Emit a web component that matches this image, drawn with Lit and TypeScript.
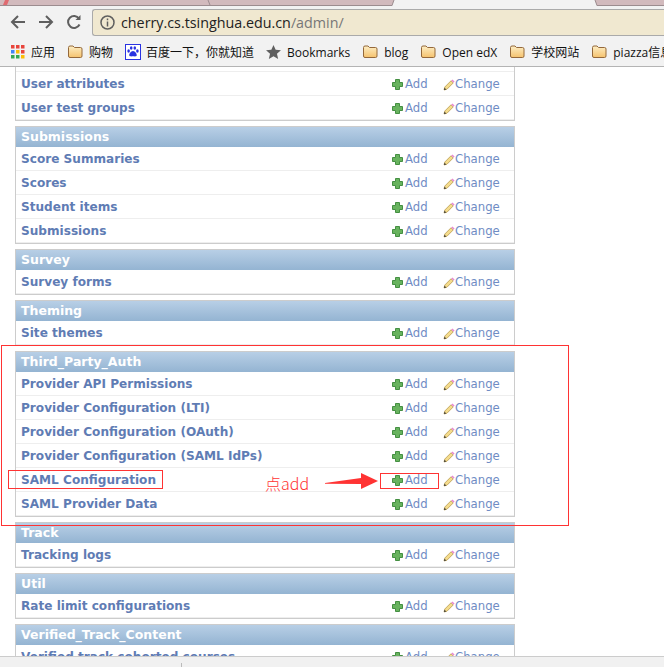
import { LitElement, html, css, svg } from "lit";
import { customElement } from "lit/decorators.js";

type Mod = { title?: string; rows: string[]; stub?: boolean };

const MODULES: Mod[] = [
  { rows: ["User attributes", "User test groups"], stub: true },
  { title: "Submissions", rows: ["Score Summaries", "Scores", "Student items", "Submissions"] },
  { title: "Survey", rows: ["Survey forms"] },
  { title: "Theming", rows: ["Site themes"] },
  {
    title: "Third_Party_Auth",
    rows: [
      "Provider API Permissions",
      "Provider Configuration (LTI)",
      "Provider Configuration (OAuth)",
      "Provider Configuration (SAML IdPs)",
      "SAML Configuration",
      "SAML Provider Data",
    ],
  },
  { title: "Track", rows: ["Tracking logs"] },
  { title: "Util", rows: ["Rate limit configurations"] },
  { title: "Verified_Track_Content", rows: ["Verified track cohorted courses"] },
];

const plus = svg`<svg class="ic" width="11" height="11" viewBox="0 0 11 11">
  <path d="M3.500.5h4v3h3v4h-3v3h-4v-3h-3v-4h3z" fill="#68b35e" stroke="#448f42" stroke-width="1"/>
</svg>`;

const pencil = svg`<svg class="ic" width="12" height="12" viewBox="0 0 12 12">
  <path d="M1 11l.8-3L8 1.800 10.200 4 4 10.200z" fill="#f5dc8c" stroke="#b89a50" stroke-width=".8"/>
  <path d="M8.200 1.600l1.200-1.200 2.200 2.200-1.200 1.200z" fill="#e88ad0"/>
  <path d="M1 11l.6-2.200 1.600 1.600z" fill="#333"/>
</svg>`;

const folder = svg`<svg class="bm-ic" width="16" height="14" viewBox="0 0 16 14">
  <defs><linearGradient id="fg" x1="0" y1="0" x2="0" y2="1"><stop offset="0" stop-color="#fdeec4"/><stop offset="1" stop-color="#f5c26e"/></linearGradient></defs>
  <path d="M1.500 2.500q0-1.500 1.500-1.500h3l1.500 1.500h6q1.500 0 1.500 1.500v7q0 1.500-1.500 1.500H3q-1.500 0-1.500-1.500z" fill="url(#fg)" stroke="#94683a"/>
</svg>`;

const appsGrid = svg`<svg class="bm-ic" width="14" height="14" viewBox="0 0 14 14">
  ${[
    ["#e8453c", "#e8453c", "#e8453c"],
    ["#4285f4", "#fbbc05", "#e8453c"],
    ["#34a853", "#34a853", "#fbbc05"],
  ].flatMap((r, y) => r.map((c, x) => svg`<rect x=${x * 5} y=${y * 5} width="3.500" height="3.500" fill=${c}/>`))}
</svg>`;

const paw = svg`<svg class="bm-ic" width="16" height="16" viewBox="0 0 16 16">
  <rect x=".5" y=".5" width="15" height="15" fill="#fff" stroke="#2932e1"/>
  <g fill="#2932e1">
    <ellipse cx="3.600" cy="7" rx="1.300" ry="1.700"/><ellipse cx="6.200" cy="4" rx="1.300" ry="1.800"/>
    <ellipse cx="9.800" cy="4" rx="1.300" ry="1.800"/><ellipse cx="12.400" cy="7" rx="1.300" ry="1.700"/>
    <path d="M8 7c-2 0-4.200 3-3.700 4.500.5 1.300 2.200.8 3.700.8s3.200.5 3.700-.8C12.200 10 10 7 8 7z"/>
  </g>
</svg>`;

const star = svg`<svg class="bm-ic" width="15" height="14" viewBox="0 0 16 15">
  <path d="M8 0l2.300 5.200 5.700.5-4.300 3.700 1.300 5.600L8 12l-5 3 1.300-5.600L0 5.700l5.700-.5z" fill="#5f5f5f"/>
</svg>`;

@customElement("app-root")
export class AppRoot extends LitElement {
  static styles = css`
    :host {
      display: flex;
      flex-direction: column;
      height: 667px;
      overflow: hidden;
      position: relative;
      background: #fff;
      font-family: "DejaVu Sans", sans-serif;
    }
    .tabstrip {
      height: 6px;
      flex: none;
      display: block;
    }
    .toolbar {
      height: 32px;
      flex: none;
      background: #f2f2f2;
      display: flex;
      align-items: center;
      box-sizing: border-box;
      padding-left: 10px;
    }
    .nav {
      display: flex;
      gap: 12px;
      margin-right: 10px;
    }
    .omni {
      flex: 1;
      height: 27px;
      box-sizing: border-box;
      background: #f0e8d0;
      border: 1px solid #aaa;
      border-right: none;
      border-radius: 3px 0 0 3px;
      display: flex;
      align-items: center;
      padding-left: 7px;
      gap: 6px;
      font: 14.300px "Open Sans", sans-serif;
      color: #222;
    }
    .omni span {
      color: #777;
    }
    .bookmarks {
      height: 29px;
      flex: none;
      box-sizing: border-box;
      background: #f2f2f2;
      border-bottom: 1px solid #b4b4b4;
      display: flex;
      align-items: center;
      padding-left: 11px;
      font: 12px "Open Sans", "Noto Sans CJK SC", sans-serif;
      color: #111;
      white-space: nowrap;
      overflow: hidden;
    }
    .bm {
      display: flex;
      align-items: center;
      gap: 6px;
      margin-right: 12px;
    }
    .bm.tight {
      gap: 5px;
    }
    .page {
      flex: 1;
      min-height: 0;
      overflow: hidden;
      padding-left: 15px;
    }
    .module {
      width: 500px;
      box-sizing: border-box;
      border: 1px solid #ccc;
      margin-bottom: 5px;
    }
    .module.stub {
      border-top: none;
    }
    .stub-top {
      height: 4px;
      border-bottom: 1px solid #eee;
    }
    .caption {
      height: 20px;
      line-height: 20px;
      padding-left: 5px;
      background: linear-gradient(#b8cfe6, #94b4d2);
      color: #fff;
      font-weight: bold;
      font-size: 12.500px;
    }
    .row {
      height: 24px;
      box-sizing: border-box;
      border-bottom: 1px solid #eee;
      display: flex;
      align-items: center;
      padding-left: 5px;
    }
    .row .name {
      flex: 1;
      font-weight: bold;
      font-size: 12.100px;
      color: #5f7cb4;
      white-space: nowrap;
    }
    .action {
      display: flex;
      align-items: center;
      font-size: 11.700px;
      color: #6f8cc4;
    }
    .add {
      width: 51px;
      gap: 2px;
    }
    .change {
      width: 71px;
    }
    .ic {
      flex: none;
      margin-top: 2px;
    }
    .status {
      height: 11px;
      flex: none;
      box-sizing: border-box;
      background: #f1f1f1;
      border-top: 1px solid #ccc;
      padding: 6px 0 0 181px;
    }
    .tick {
      width: 1px;
      height: 4px;
      background: #bbb;
    }
    .mark {
      position: absolute;
      border: 1px solid #f33;
      box-sizing: border-box;
    }
    .note {
      position: absolute;
      left: 265px;
      top: 472px;
      color: #f33;
      font: 300 16px "Noto Sans CJK SC", sans-serif;
      line-height: 22px;
    }
    .arrow {
      position: absolute;
      left: 325px;
      top: 473px;
    }
  `;

  renderRow(name: string) {
    return html`<div class="row">
      <div class="name">${name}</div>
      <div class="action add">${plus}Add</div>
      <div class="action change">${pencil}Change</div>
    </div>`;
  }

  render() {
    return html`
      <svg class="tabstrip" width="664" height="6" viewBox="0 0 664 6">
        <rect width="664" height="6" fill="#d2babd"/>
        <path d="M5 0h4l-2 5H3z" fill="#e06a70"/>
        <path d="M0 5.500h664" stroke="#9c8c8f"/>
        <path d="M208 0l2 5" stroke="#9c8c8f" fill="none"/>
        <path d="M394 0h201l2 6H392z" fill="#f2f2f2"/>
        <path d="M394 0l-2 5.500M595 0l2 5.500" stroke="#9c8c8f" fill="none"/>
      </svg>
      <div class="toolbar">
        <div class="nav">
          <svg width="16" height="16" viewBox="0 0 16 16" fill="none" stroke="#5f5f5f" stroke-width="2"><path d="M15 8H2M8 2L2 8l6 6"/></svg>
          <svg width="16" height="16" viewBox="0 0 16 16" fill="none" stroke="#5f5f5f" stroke-width="2"><path d="M1 8h13M8 2l6 6-6 6"/></svg>
          <svg width="16" height="16" viewBox="0 0 16 16" fill="none" stroke="#5f5f5f" stroke-width="2"><path d="M13.500 10.500A6 6 0 1 1 13 4.500"/><path d="M14.500 1v5h-5z" fill="#5f5f5f" stroke="none"/></svg>
        </div>
        <div class="omni">
          <svg width="15" height="15" viewBox="0 0 15 15" fill="none" stroke="#5f5f5f" stroke-width="1.500"><circle cx="7.500" cy="7.500" r="6.500"/><path d="M7.500 6.500v5M7.500 3.500v1.800"/></svg>
          <div>cherry.cs.tsinghua.edu.cn<span>/admin/</span></div>
        </div>
      </div>
      <div class="bookmarks">
        <div class="bm">${appsGrid}应用</div>
        <div class="bm">${folder}购物</div>
        <div class="bm tight">${paw}百度一下，你就知道</div>
        <div class="bm">${star}Bookmarks</div>
        <div class="bm">${folder}blog</div>
        <div class="bm">${folder}Open edX</div>
        <div class="bm">${folder}学校网站</div>
        <div class="bm">${folder}piazza信息</div>
      </div>
      <div class="page">
        ${MODULES.map(
          (m) => html`<div class="module ${m.stub ? "stub" : ""}">
            ${m.stub ? html`<div class="stub-top"></div>` : html`<div class="caption">${m.title}</div>`}
            ${m.rows.map((r) => this.renderRow(r))}
          </div>`
        )}
      </div>
      <div class="status"><div class="tick"></div></div>
      <div class="mark" style="left:1px;top:345px;width:568px;height:181px"></div>
      <div class="mark" style="left:8px;top:470px;width:155px;height:19px"></div>
      <div class="mark" style="left:380px;top:473px;width:59px;height:16px"></div>
      <div class="note">点add</div>
      <svg class="arrow" width="54" height="17" viewBox="0 0 54 17"><path d="M0 10l36-5V0l17 8-17 8v-5L0 10.800z" fill="#f33"/></svg>
    `;
  }
}
